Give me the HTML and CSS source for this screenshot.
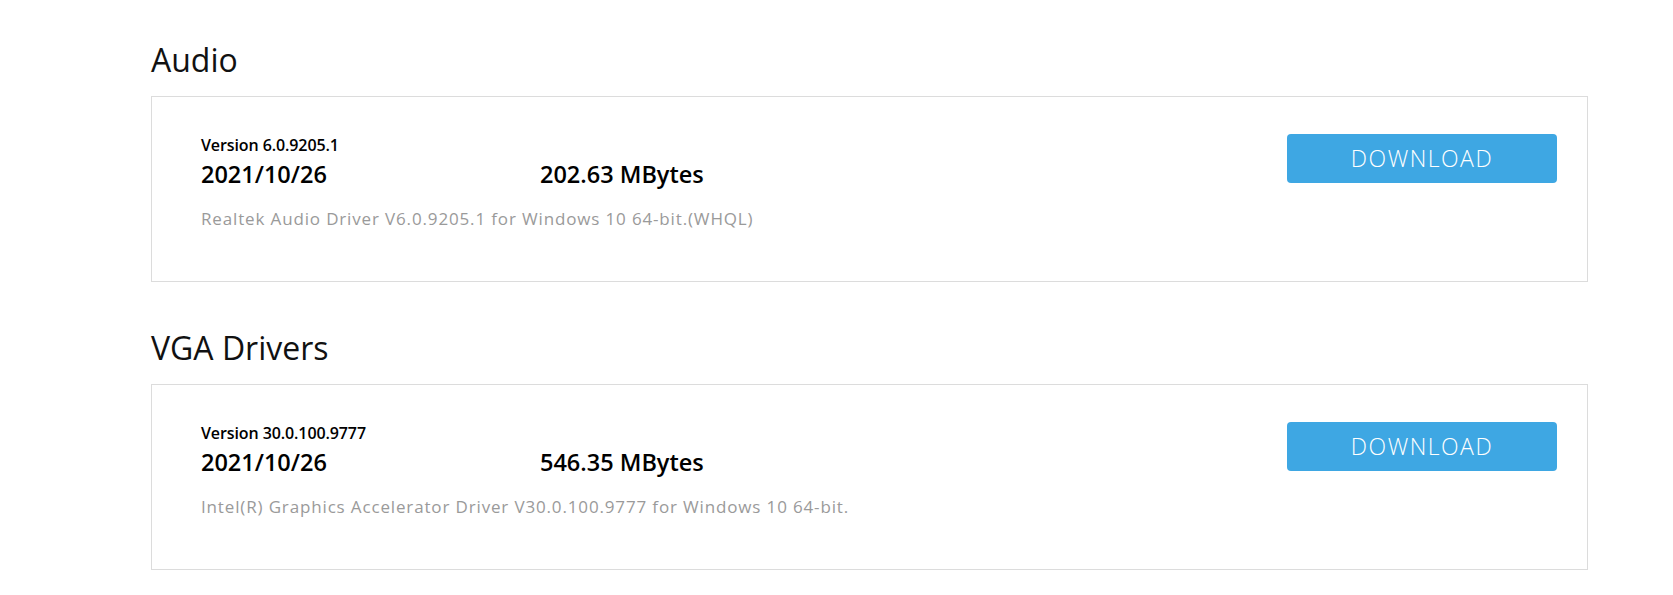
FILE: index.html
```html
<!DOCTYPE html>
<html lang="en">
<head>
<meta charset="utf-8">
<title>Drivers</title>
<link rel="stylesheet" href="styles.css">
</head>
<body>
<main class="page">
  <section class="section">
    <h2 class="section-title">Audio</h2>
    <div class="card">
      <div class="info">
        <div class="version">Version 6.0.9205.1</div>
        <div class="meta">
          <span class="date">2021/10/26</span>
          <span class="size">202.63 MBytes</span>
        </div>
        <p class="desc">Realtek Audio Driver V6.0.9205.1 for Windows 10 64-bit.(WHQL)</p>
      </div>
      <button class="download" type="button">DOWNLOAD</button>
    </div>
  </section>
  <section class="section">
    <h2 class="section-title">VGA Drivers</h2>
    <div class="card">
      <div class="info">
        <div class="version">Version 30.0.100.9777</div>
        <div class="meta">
          <span class="date">2021/10/26</span>
          <span class="size">546.35 MBytes</span>
        </div>
        <p class="desc">Intel(R) Graphics Accelerator Driver V30.0.100.9777 for Windows 10 64-bit.</p>
      </div>
      <button class="download" type="button">DOWNLOAD</button>
    </div>
  </section>
</main>
</body>
</html>
```
FILE: styles.css
```css
html, body {
  margin: 0;
  padding: 0;
  background: #ffffff;
}
body {
  font-family: "Open Sans", "Noto Sans", Arial, sans-serif;
  color: #000;
}
.page {
  width: 1437px;
  margin-left: 151px;
  padding-top: 39.6px;
}
.section {
  margin-bottom: 45.6px;
}
.section-title {
  margin: 0 0 16.4px 0;
  font-size: 32px;
  line-height: 40px;
  font-weight: 400;
  color: #111;
}
.card {
  box-sizing: border-box;
  height: 186px;
  border: 1px solid #dcdcdc;
  display: flex;
  justify-content: space-between;
  align-items: flex-start;
  padding: 38px 30px 0 49px;
}
.info {
  display: flex;
  flex-direction: column;
}
.version {
  font-size: 16px;
  line-height: 20px;
  font-weight: 600;
  color: #000;
  letter-spacing: -0.1px;
  margin-bottom: 4px;
}
.meta {
  display: flex;
  font-size: 23.5px;
  line-height: 30px;
  font-weight: 600;
  color: #000;
}
.date {
  width: 339px;
}
.desc {
  margin: 19px 0 0 0;
  font-size: 17px;
  line-height: 22px;
  color: #9a9a9a;
  letter-spacing: 0.85px;
}
.download {
  margin-top: -1px;
  width: 270px;
  height: 49px;
  border: none;
  border-radius: 4px;
  background: #3ea7e3;
  color: #fff;
  font-family: "Open Sans", "Noto Sans", Arial, sans-serif;
  font-size: 23px;
  line-height: 30px;
  font-weight: 300;
  letter-spacing: 1.5px;
  display: flex;
  align-items: center;
  justify-content: center;
  padding: 0;
}
```
